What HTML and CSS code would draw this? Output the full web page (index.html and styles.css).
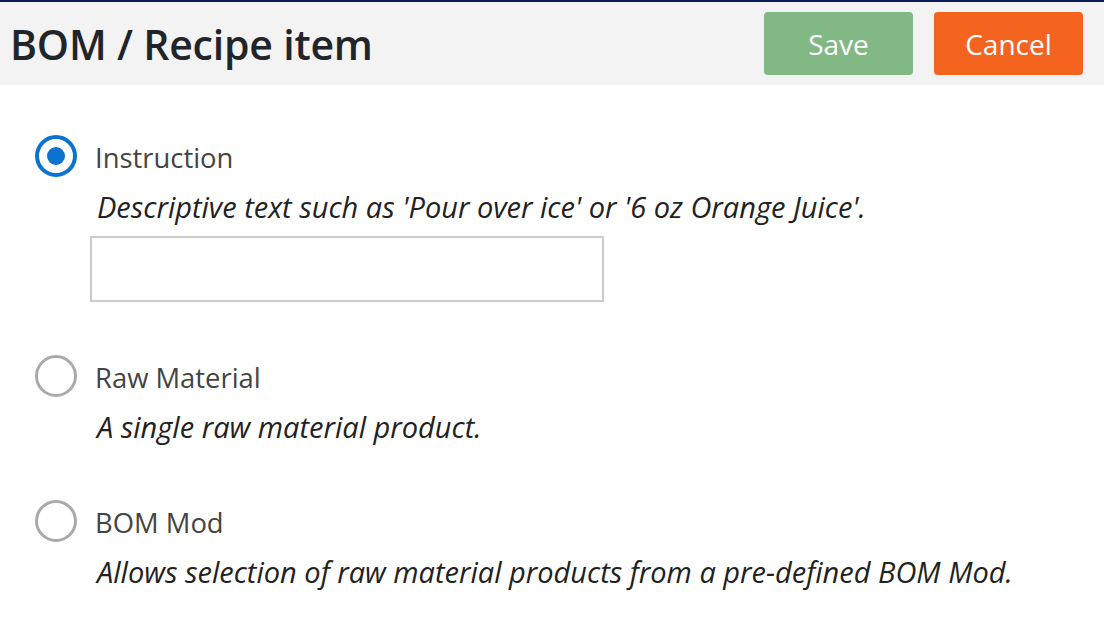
FILE: index.html
```html
<!DOCTYPE html>
<html lang="en">
<head>
<meta charset="utf-8">
<title>BOM / Recipe item</title>
<link rel="stylesheet" href="styles.css">
</head>
<body>
<header class="topbar">
  <h1 class="title">BOM / Recipe item</h1>
  <div class="actions">
    <button class="btn btn-save" type="button">Save</button>
    <button class="btn btn-cancel" type="button">Cancel</button>
  </div>
</header>
<main class="content">
  <div class="option option-first">
    <span class="radio radio-checked"></span>
    <span class="label">Instruction</span>
    <p class="desc">Descriptive text such as 'Pour over ice' or '6 oz Orange Juice'.</p>
    <input class="text-input" type="text">
  </div>
  <div class="option">
    <span class="radio"></span>
    <span class="label">Raw Material</span>
    <p class="desc">A single raw material product.</p>
  </div>
  <div class="option">
    <span class="radio"></span>
    <span class="label">BOM Mod</span>
    <p class="desc">Allows selection of raw material products from a pre-defined BOM Mod.</p>
  </div>
</main>
</body>
</html>
```
FILE: styles.css
```css
html, body {
  margin: 0;
  padding: 0;
  background: #ffffff;
}
body {
  font-family: "Open Sans", "Noto Sans", sans-serif;
  border-top: 2px solid #0b1f55;
  color: #222;
}
.topbar {
  height: 83px;
  background: #f3f3f3;
  display: flex;
  align-items: center;
  justify-content: space-between;
  padding: 0 21px 0 10px;
}
.title {
  margin: 0;
  font-size: 41px;
  font-weight: 600;
  color: #212529;
  letter-spacing: -0.2px;
}
.actions {
  display: flex;
  gap: 21px;
}
.btn {
  width: 149px;
  height: 63px;
  border: none;
  border-radius: 4px;
  color: #ffffff;
  font-family: inherit;
  font-size: 28px;
  padding: 0;
}
.btn-save { background: #82b884; }
.btn-cancel { background: #f5641e; }
.content {
  padding: 50px 0 0 35px;
}
.option {
  display: grid;
  grid-template-columns: 42px 1fr;
  column-gap: 18px;
  margin-bottom: 53px;
}
.radio {
  box-sizing: border-box;
  width: 42px;
  height: 42px;
  border-radius: 50%;
  border: 3px solid #aaaaaa;
  display: flex;
  align-items: center;
  justify-content: center;
}
.radio-checked {
  border: 4px solid #0b72cf;
}
.radio-checked::after {
  content: "";
  width: 18px;
  height: 18px;
  border-radius: 50%;
  background: #0b72cf;
}
.label {
  font-size: 27.4px;
  line-height: 39px;
  padding-top: 3px;
  color: #444;
}
.desc {
  grid-column: 2;
  margin: 10px 0 0 0;
  padding-left: 2px;
  font-style: italic;
  font-size: 29px;
  line-height: 40px;
  color: #222;
}
.text-input {
  grid-column: 2;
  margin: 9px 0 0 -5px;
  width: 514px;
  height: 66px;
  box-sizing: border-box;
  border: 2px solid #cccccc;
  background: #fff;
}
```
